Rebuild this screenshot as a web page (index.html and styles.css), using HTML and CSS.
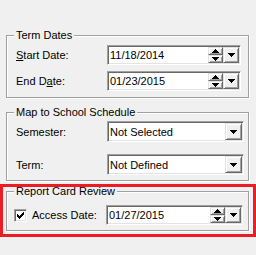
FILE: index.html
```html
<!DOCTYPE html>
<html lang="en">
	<head>
		<meta charset="UTF-8" />
		<meta name="viewport" content="width=device-width, initial-scale=1.0" />
		<title>Report Card Dates</title>
		<link rel="stylesheet" href="styles.css">
	</head>
	<body>
		<fieldset class="group">
			<legend>Term Dates</legend>
			<div class="rows rows-dates">
				<div class="row">
					<label class="field-label"><u>S</u>tart Date:</label>
					<div class="picker">
						<span class="picker-value">11/18/2014</span>
						<span class="spin">
							<span class="btn spin-btn"><svg class="arrow" width="7" height="4" viewBox="0 0 7 4"><path d="M3 0h1v1h1v1h1v1h1v1h-7v-1h1v-1h1v-1h1z" /></svg></span>
							<span class="btn spin-btn"><svg class="arrow" width="7" height="4" viewBox="0 0 7 4"><path d="M0 0h7v1h-1v1h-1v1h-1v1h-1v-1h-1v-1h-1v-1h-1z" /></svg></span>
						</span>
						<span class="btn drop-btn"><svg class="arrow" width="7" height="4" viewBox="0 0 7 4"><path d="M0 0h7v1h-1v1h-1v1h-1v1h-1v-1h-1v-1h-1v-1h-1z" /></svg></span>
					</div>
				</div>
				<div class="row">
					<label class="field-label">End D<u>a</u>te:</label>
					<div class="picker">
						<span class="picker-value">01/23/2015</span>
						<span class="spin">
							<span class="btn spin-btn"><svg class="arrow" width="7" height="4" viewBox="0 0 7 4"><path d="M3 0h1v1h1v1h1v1h1v1h-7v-1h1v-1h1v-1h1z" /></svg></span>
							<span class="btn spin-btn"><svg class="arrow" width="7" height="4" viewBox="0 0 7 4"><path d="M0 0h7v1h-1v1h-1v1h-1v1h-1v-1h-1v-1h-1v-1h-1z" /></svg></span>
						</span>
						<span class="btn drop-btn"><svg class="arrow" width="7" height="4" viewBox="0 0 7 4"><path d="M0 0h7v1h-1v1h-1v1h-1v1h-1v-1h-1v-1h-1v-1h-1z" /></svg></span>
					</div>
				</div>
			</div>
		</fieldset>

		<fieldset class="group group-map">
			<legend>Map to School Schedule</legend>
			<div class="rows rows-map">
				<div class="row row-combo">
					<label class="field-label">Semester:</label>
					<div class="combo">
						<span class="picker-value">Not Selected</span>
						<span class="btn combo-btn"><svg class="arrow" width="7" height="4" viewBox="0 0 7 4"><path d="M0 0h7v1h-1v1h-1v1h-1v1h-1v-1h-1v-1h-1v-1h-1z" /></svg></span>
					</div>
				</div>
				<div class="row row-combo">
					<label class="field-label">Term:</label>
					<div class="combo">
						<span class="picker-value">Not Defined</span>
						<span class="btn combo-btn"><svg class="arrow" width="7" height="4" viewBox="0 0 7 4"><path d="M0 0h7v1h-1v1h-1v1h-1v1h-1v-1h-1v-1h-1v-1h-1z" /></svg></span>
					</div>
				</div>
			</div>
		</fieldset>

		<div class="highlight">
			<fieldset class="group group-review">
				<legend>Report Card Review</legend>
				<div class="row">
					<label class="check-label">
						<span class="checkbox"><svg width="7" height="7" viewBox="0 0 7 7"><path d="M0 2h1v3h-1z M1 3h1v3h-1z M2 4h1v3h-1z M3 3h1v3h-1z M4 2h1v3h-1z M5 1h1v3h-1z M6 0h1v3h-1z" /></svg></span>
						Access Date:
					</label>
					<div class="picker picker-wide">
						<span class="picker-value">01/27/2015</span>
						<span class="spin">
							<span class="btn spin-btn"><svg class="arrow" width="7" height="4" viewBox="0 0 7 4"><path d="M3 0h1v1h1v1h1v1h1v1h-7v-1h1v-1h1v-1h1z" /></svg></span>
							<span class="btn spin-btn"><svg class="arrow" width="7" height="4" viewBox="0 0 7 4"><path d="M0 0h7v1h-1v1h-1v1h-1v1h-1v-1h-1v-1h-1v-1h-1z" /></svg></span>
						</span>
						<span class="btn drop-btn"><svg class="arrow" width="7" height="4" viewBox="0 0 7 4"><path d="M0 0h7v1h-1v1h-1v1h-1v1h-1v-1h-1v-1h-1v-1h-1z" /></svg></span>
					</div>
				</div>
			</fieldset>
		</div>
	</body>
</html>
```

FILE: styles.css
```css
:root {
	--face: #f0f0f0;
	--light: #e3e3e3;
	--shadow: #a0a0a0;
	--dark-shadow: #696969;
	--highlight: #ffffff;
	--mark-red: #ed1c24;
}
body {
	font-family: "Liberation Sans", Arial, sans-serif;
	font-size: 11px;
	color: #000;
	background-color: var(--face);
	margin: 0;
	padding: 31px 7px 0 6px;
	width: 256px;
	height: 255px;
	box-sizing: border-box;
	overflow: hidden;
}

/* Etched group box */
.group {
	margin: 0;
	min-width: 0;
	padding: 5px 0 6px 7px;
	border: 1px solid var(--shadow);
	box-shadow: inset 1px 1px var(--highlight), 1px 1px var(--highlight);
}
.group legend {
	line-height: 9px;
	padding: 0 2px;
	background-color: var(--face);
}
.group-map {
	margin-top: 10px;
	padding-top: 4px;
	padding-bottom: 5px;
}
.group-review {
	padding-top: 9px;
	padding-bottom: 5px;
}

.rows {
	display: flex;
	flex-direction: column;
}
.rows-dates {
	gap: 6px;
}
.rows-map {
	gap: 12px;
}
.row {
	display: flex;
	align-items: center;
	height: 20px;
}
.row-combo {
	height: 21px;
}
.field-label {
	width: 93px;
	padding-left: 2px;
	box-sizing: border-box;
}
.check-label {
	width: 92px;
	display: flex;
	align-items: center;
	gap: 5px;
}

/* Sunken frames */
.picker,
.combo {
	display: flex;
	width: 134px;
	height: 20px;
	box-sizing: border-box;
	padding: 1px;
	border: 1px solid;
	border-color: var(--shadow) var(--highlight) var(--highlight) var(--shadow);
	box-shadow: inset 1px 1px var(--dark-shadow), inset -1px -1px var(--light);
	background-color: #fff;
}
.picker-wide {
	width: 137px;
}
.combo {
	width: 137px;
	height: 21px;
}
.picker-value {
	flex-grow: 1;
	padding-left: 1px;
	display: flex;
	align-items: center;
	background-color: #fff;
}

/* Raised buttons */
.btn {
	display: flex;
	align-items: center;
	justify-content: center;
	box-sizing: border-box;
	background-color: var(--face);
	border: 1px solid;
	border-color: var(--light) var(--dark-shadow) var(--dark-shadow) var(--light);
	box-shadow: inset 1px 1px var(--highlight), inset -1px -1px var(--shadow);
}
.spin {
	display: flex;
	flex-direction: column;
	width: 15px;
}
.spin-btn {
	height: 8px;
}
.drop-btn {
	width: 16px;
}
.combo-btn {
	width: 17px;
}
.arrow {
	fill: #000;
	shape-rendering: crispEdges;
}

/* Checkbox */
.checkbox {
	width: 13px;
	height: 13px;
	box-sizing: border-box;
	padding: 1px;
	border: 1px solid;
	border-color: var(--shadow) var(--highlight) var(--highlight) var(--shadow);
	box-shadow: inset 1px 1px var(--dark-shadow), inset -1px -1px var(--light);
	background-color: #fff;
	display: flex;
	align-items: center;
	justify-content: center;
}
.checkbox svg {
	fill: #000;
	shape-rendering: crispEdges;
}

.highlight {
	margin: 3px -7px 0 -6px;
	border: 3px solid var(--mark-red);
	padding: 0 4px 3px 3px;
}
```
